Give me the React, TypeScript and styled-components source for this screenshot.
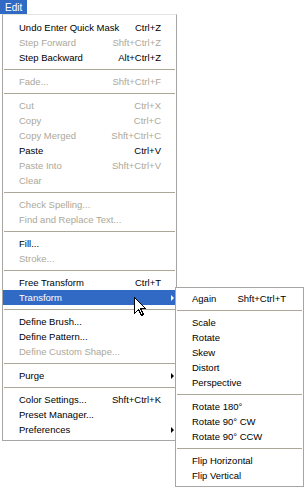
import React from "react";
import styled, { createGlobalStyle, css } from "styled-components";

const GlobalStyle = createGlobalStyle`
  html, body {
    margin: 0;
    padding: 0;
    background: #ffffff;
  }
  body {
    font-family: "Liberation Sans", Arial, sans-serif;
    font-size: 9.5px;
    -webkit-font-smoothing: none;
  }
`;

const Page = styled.div`
  position: relative;
  width: 304px;
  height: 488px;
  overflow: hidden;
  display: flex;
  flex-direction: column;
  align-items: flex-start;
  background: #ffffff;
`;

const MenuBarItem = styled.div`
  width: 27px;
  height: 14px;
  box-sizing: border-box;
  padding-left: 5px;
  display: flex;
  align-items: center;
  background: #316ac5;
  color: #ffffff;
  font-size: 10px;
`;

const Menu = styled.div`
  margin-left: 2px;
  width: 175px;
  box-sizing: border-box;
  border: 1px solid #a7a6a2;
  border-top-color: #e4e3df;
  padding: 5px 0 3px;
  background: #ffffff;
  display: flex;
  flex-direction: column;
`;

const SubMenu = styled.div`
  position: absolute;
  left: 175px;
  top: 287px;
  width: 129px;
  box-sizing: border-box;
  border: 1px solid #a7a6a2;
  padding: 3px 0;
  background: #ffffff;
  display: flex;
  flex-direction: column;
`;

const Item = styled.div<{ $disabled?: boolean; $active?: boolean; $sub?: boolean }>`
  height: 15px;
  display: grid;
  grid-template-columns: 1fr auto ${(p) => (p.$sub ? "17px" : "15px")};
  align-items: center;
  padding-left: ${(p) => (p.$sub ? "16px" : "16px")};
  color: ${(p) => (p.$disabled ? "#aca899" : "#000000")};
  white-space: nowrap;
  ${(p) =>
    p.$active &&
    css`
      background: #316ac5;
      color: #ffffff;
    `}
`;

const Label = styled.span`
  overflow: hidden;
`;

const Shortcut = styled.span`
  text-align: right;
`;

const ArrowCell = styled.span`
  display: flex;
  align-items: center;
  padding-left: 10px;
`;

const Arrow = styled.span<{ $light?: boolean }>`
  width: 0;
  height: 0;
  border-top: 3px solid transparent;
  border-bottom: 3px solid transparent;
  border-left: 3px solid ${(p) => (p.$light ? "#ffffff" : "#000000")};
`;

const Separator = styled.div`
  height: 9px;
  display: flex;
  align-items: center;
  padding: 0 1px;
  &::after {
    content: "";
    flex: 1;
    height: 1px;
    background: #aca899;
  }
`;

const Cursor = styled.svg`
  position: absolute;
  left: 134px;
  top: 297px;
`;

type Entry =
  | { sep: true }
  | {
      sep?: false;
      label: string;
      shortcut?: string;
      disabled?: boolean;
      active?: boolean;
      submenu?: boolean;
    };

const mainEntries: Entry[] = [
  { label: "Undo Enter Quick Mask", shortcut: "Ctrl+Z" },
  { label: "Step Forward", shortcut: "Shft+Ctrl+Z", disabled: true },
  { label: "Step Backward", shortcut: "Alt+Ctrl+Z" },
  { sep: true },
  { label: "Fade...", shortcut: "Shft+Ctrl+F", disabled: true },
  { sep: true },
  { label: "Cut", shortcut: "Ctrl+X", disabled: true },
  { label: "Copy", shortcut: "Ctrl+C", disabled: true },
  { label: "Copy Merged", shortcut: "Shft+Ctrl+C", disabled: true },
  { label: "Paste", shortcut: "Ctrl+V" },
  { label: "Paste Into", shortcut: "Shft+Ctrl+V", disabled: true },
  { label: "Clear", disabled: true },
  { sep: true },
  { label: "Check Spelling...", disabled: true },
  { label: "Find and Replace Text...", disabled: true },
  { sep: true },
  { label: "Fill..." },
  { label: "Stroke...", disabled: true },
  { sep: true },
  { label: "Free Transform", shortcut: "Ctrl+T" },
  { label: "Transform", active: true, submenu: true },
  { sep: true },
  { label: "Define Brush..." },
  { label: "Define Pattern..." },
  { label: "Define Custom Shape...", disabled: true },
  { sep: true },
  { label: "Purge", submenu: true },
  { sep: true },
  { label: "Color Settings...", shortcut: "Shft+Ctrl+K" },
  { label: "Preset Manager..." },
  { label: "Preferences", submenu: true },
];

const subEntries: Entry[] = [
  { label: "Again", shortcut: "Shft+Ctrl+T" },
  { sep: true },
  { label: "Scale" },
  { label: "Rotate" },
  { label: "Skew" },
  { label: "Distort" },
  { label: "Perspective" },
  { sep: true },
  { label: "Rotate 180°" },
  { label: "Rotate 90° CW" },
  { label: "Rotate 90° CCW" },
  { sep: true },
  { label: "Flip Horizontal" },
  { label: "Flip Vertical" },
];

function renderEntries(entries: Entry[], sub: boolean) {
  return entries.map((e, i) => {
    if (e.sep) return <Separator key={i} />;
    return (
      <Item key={i} $disabled={e.disabled} $active={e.active} $sub={sub}>
        <Label>{e.label}</Label>
        <Shortcut>{e.shortcut ?? ""}</Shortcut>
        <ArrowCell>{e.submenu && <Arrow $light={e.active} />}</ArrowCell>
      </Item>
    );
  });
}

export default function App() {
  return (
    <>
      <GlobalStyle />
      <Page>
        <MenuBarItem>Edit</MenuBarItem>
        <Menu>{renderEntries(mainEntries, false)}</Menu>
        <SubMenu>{renderEntries(subEntries, true)}</SubMenu>
        <Cursor width="13" height="20" viewBox="0 0 13 20">
          <path
            d="M0.5 0.5 L0.5 16.5 L4.5 12.5 L7.5 18.5 L9.5 17.5 L6.5 11.5 L11.5 11.5 Z"
            fill="#ffffff"
            stroke="#000000"
            strokeWidth="1"
            shapeRendering="crispEdges"
          />
        </Cursor>
      </Page>
    </>
  );
}
